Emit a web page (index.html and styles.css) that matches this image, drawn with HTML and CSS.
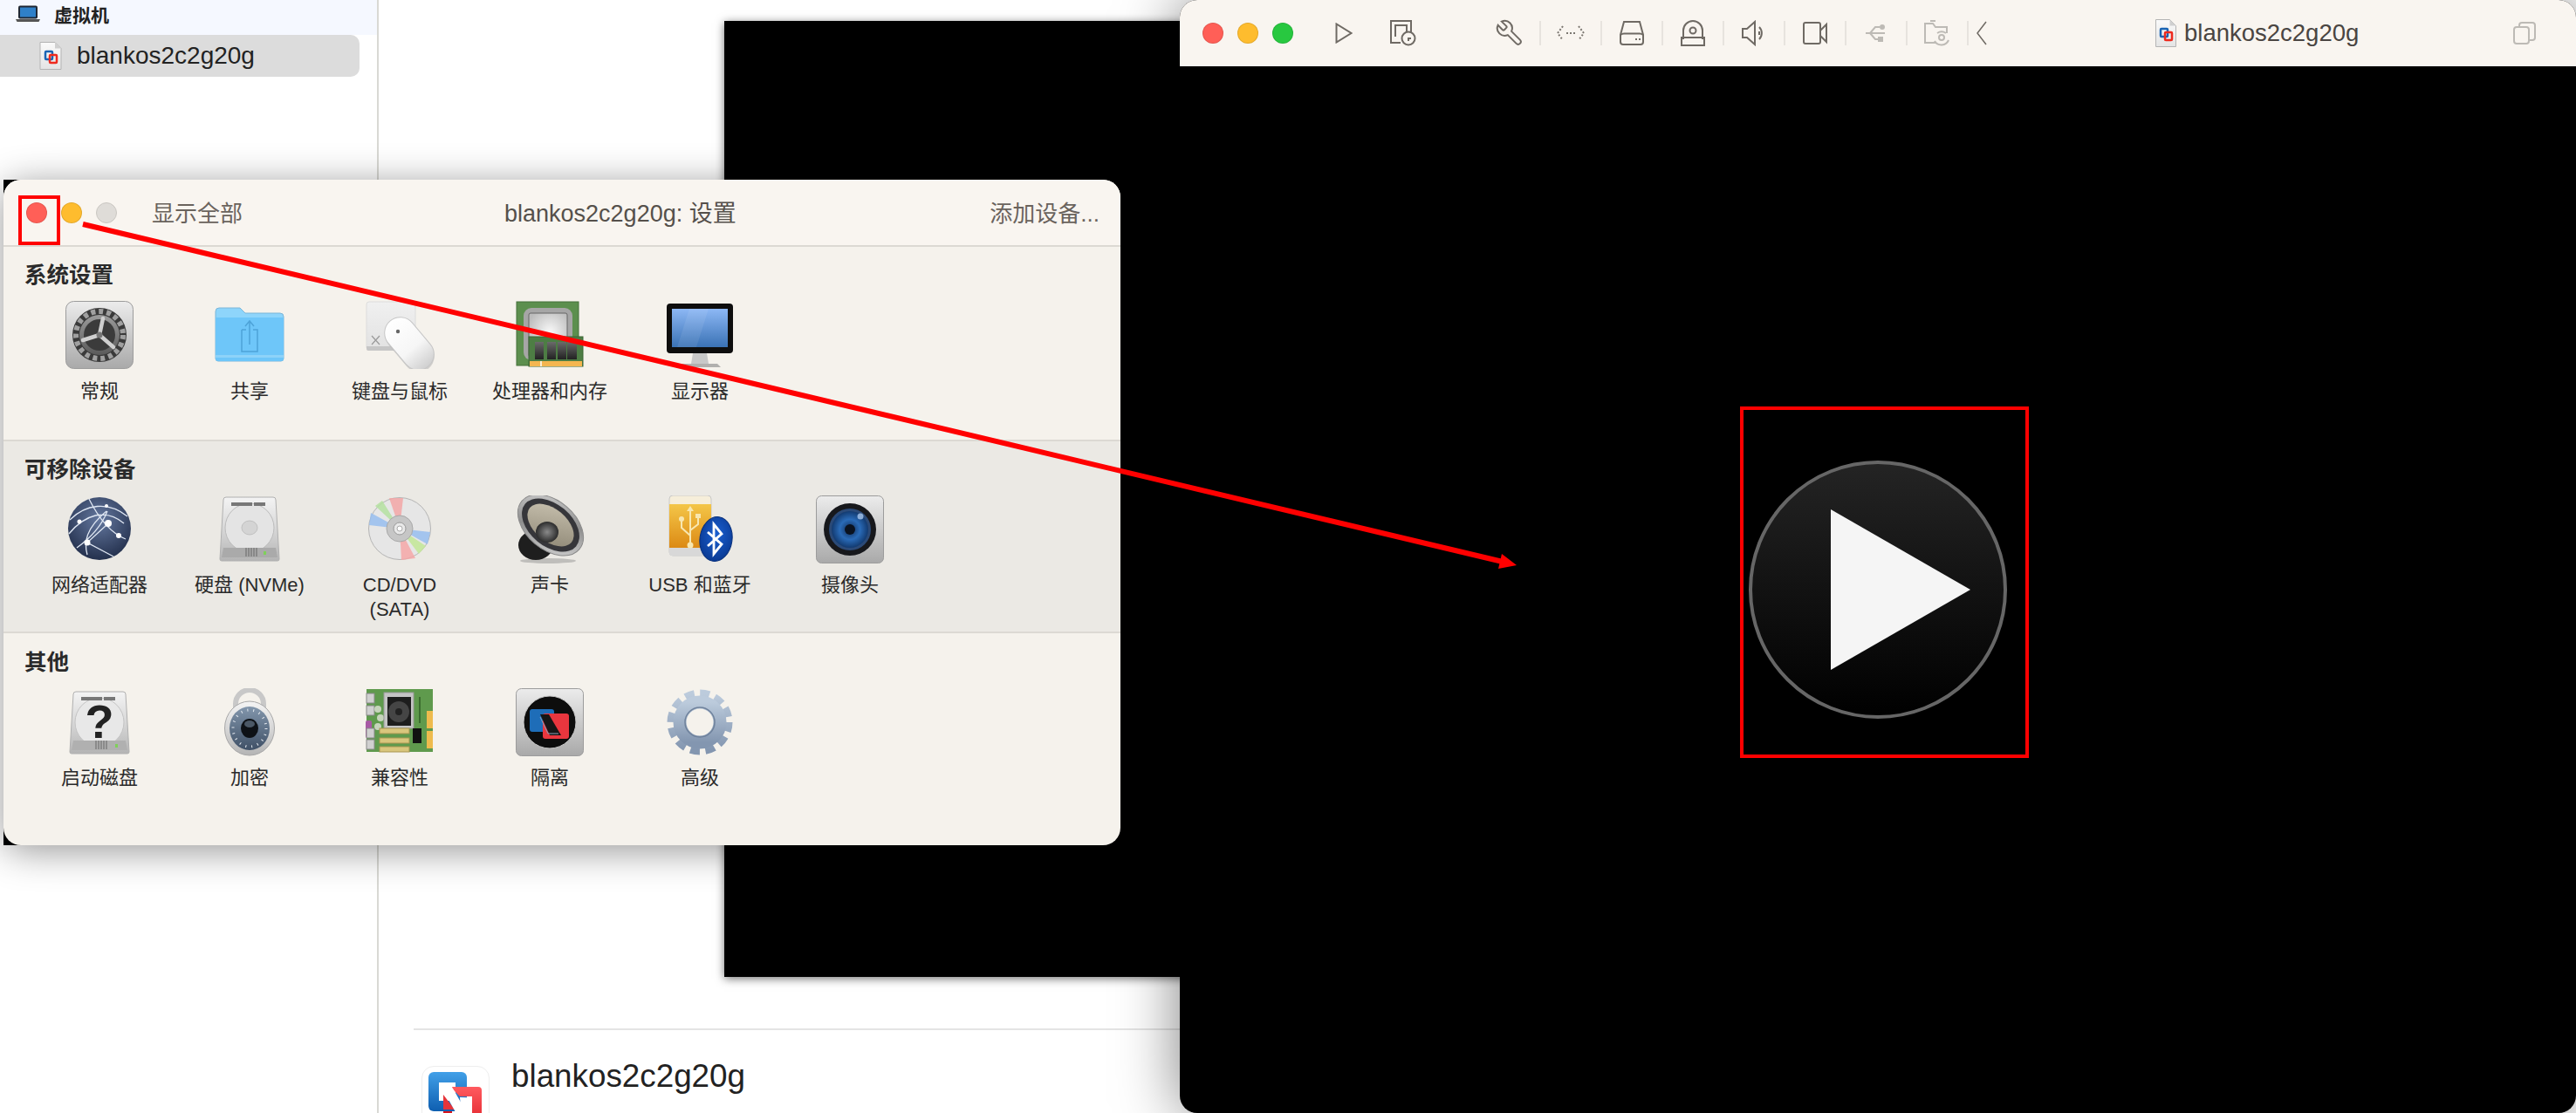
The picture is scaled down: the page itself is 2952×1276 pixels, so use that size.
FILE: index.html
```html
<!DOCTYPE html>
<html lang="zh">
<head>
<meta charset="utf-8">
<title>blankos2c2g20g</title>
<link rel="stylesheet" href="styles.css">
</head>
<body>
<svg class="defs" width="0" height="0" aria-hidden="true">
  <defs>
    <linearGradient id="silver" x1="0" y1="0" x2="0" y2="1"><stop offset="0" stop-color="#ececec"/><stop offset="1" stop-color="#a9a9a9"/></linearGradient>
    <linearGradient id="metal" x1="0" y1="0" x2="0" y2="1"><stop offset="0" stop-color="#f4f4f4"/><stop offset=".55" stop-color="#d4d4d4"/><stop offset="1" stop-color="#b4b4b4"/></linearGradient>
    <linearGradient id="mouse" x1="0" y1="0" x2="0" y2="1"><stop offset="0" stop-color="#fff"/><stop offset=".6" stop-color="#f6f6f6"/><stop offset="1" stop-color="#cfcfcf"/></linearGradient>
    <linearGradient id="key" x1="0" y1="0" x2="0" y2="1"><stop offset="0" stop-color="#f0f0f0"/><stop offset="1" stop-color="#e2e2e2"/></linearGradient>
    <radialGradient id="cpu" cx=".55" cy=".45" r=".6"><stop offset="0" stop-color="#fafafa"/><stop offset="1" stop-color="#bcbcbc"/></radialGradient>
    <linearGradient id="ramchip" x1="0" y1="0" x2="0" y2="1"><stop offset="0" stop-color="#6a6a6a"/><stop offset="1" stop-color="#222"/></linearGradient>
    <linearGradient id="darkmetal" x1="0" y1="0" x2="0" y2="1"><stop offset="0" stop-color="#9b9b9b"/><stop offset="1" stop-color="#5a5a5a"/></linearGradient>
    <linearGradient id="screen" x1="0" y1="0" x2="0" y2="1"><stop offset="0" stop-color="#8db8f5"/><stop offset="1" stop-color="#3a72b5"/></linearGradient>
    <radialGradient id="globe" cx=".5" cy=".35" r=".7"><stop offset="0" stop-color="#64789f"/><stop offset="1" stop-color="#1f2b47"/></radialGradient>
    <linearGradient id="cone" x1="0" y1="0" x2="1" y2="1"><stop offset="0" stop-color="#cbc4b2"/><stop offset="1" stop-color="#8c8573"/></linearGradient>
    <linearGradient id="rim" x1="0" y1="0" x2="1" y2="1"><stop offset="0" stop-color="#d6d6d6"/><stop offset=".5" stop-color="#8e8e8e"/><stop offset="1" stop-color="#dcdcdc"/></linearGradient>
    <radialGradient id="dome" cx=".5" cy=".5" r=".5"><stop offset="0" stop-color="#8a8a8a"/><stop offset="1" stop-color="#2c2c2c"/></radialGradient>
    <linearGradient id="usbcard" x1="0" y1="0" x2="0" y2="1"><stop offset="0" stop-color="#f4c648"/><stop offset="1" stop-color="#dc8a14"/></linearGradient>
    <radialGradient id="btblue" cx=".5" cy=".4" r=".6"><stop offset="0" stop-color="#1a5fd0"/><stop offset="1" stop-color="#0a3a94"/></radialGradient>
    <radialGradient id="lens" cx=".5" cy=".5" r=".5"><stop offset="0" stop-color="#0f2a55"/><stop offset=".55" stop-color="#2a6bb8"/><stop offset="1" stop-color="#123a70"/></radialGradient>
    <linearGradient id="steel" x1="0" y1="0" x2="0" y2="1"><stop offset="0" stop-color="#bccbdc"/><stop offset="1" stop-color="#8396b0"/></linearGradient>
    <linearGradient id="dial" x1="0" y1="0" x2="0" y2="1"><stop offset="0" stop-color="#8296ac"/><stop offset="1" stop-color="#3f5066"/></linearGradient>
    <linearGradient id="logoblue" x1="0" y1="0" x2="0" y2="1"><stop offset="0" stop-color="#41a0e8"/><stop offset="1" stop-color="#0e5eb0"/></linearGradient>
    <linearGradient id="logored" x1="0" y1="0" x2="0" y2="1"><stop offset="0" stop-color="#ff5a5f"/><stop offset="1" stop-color="#d8161e"/></linearGradient>
    <linearGradient id="playdisc" x1="0" y1="0" x2="0" y2="1"><stop offset="0" stop-color="#242424"/><stop offset="1" stop-color="#000"/></linearGradient>
    <linearGradient id="pagefill" x1="0" y1="0" x2="0" y2="1"><stop offset="0" stop-color="#fafafa"/><stop offset="1" stop-color="#e4e4e4"/></linearGradient>
  </defs>
</svg>

<div class="desktop">
  <div class="app">
    <aside class="sidebar">
      <div class="side-head">
        <svg class="side-laptop" width="30" height="20" viewBox="0 0 30 20"><rect x="4" y="0.5" width="22" height="15" rx="2" fill="#1f2733"/><rect x="6" y="2.5" width="18" height="11" fill="#2f80c8"/><path d="M1 16h28l-1.5 3h-25z" fill="#555"/></svg>
        <span>虚拟机</span>
      </div>
      <div class="side-row">
        <svg width="26" height="32" viewBox="0 0 26 32"><path d="M1 .5h17l7 7v24H1z" fill="url(#pagefill)" stroke="#b4b4b4"/><path d="M18 .5v7h7z" fill="#d0d0d0"/><rect x="7" y="11" width="8" height="9" rx="1" fill="none" stroke="#1a64b4" stroke-width="2.5"/><rect x="12" y="15" width="8" height="9" rx="1" fill="none" stroke="#ee2a1e" stroke-width="2.5"/></svg>
        <span>blankos2c2g20g</span>
      </div>
    </aside>
    <main class="content">
      <div class="preview"></div>
      <div class="detail">
        <div class="detail-icon">
          <svg width="78" height="78" viewBox="0 0 78 78"><rect x="8" y="7" width="44" height="45" rx="6" fill="url(#logoblue)"/><path d="M20 19h19v21H20z" fill="#fff"/><path d="M25 33l13 17H25z" fill="#e5343a"/><path d="M25 52h10v26H25z" fill="#d8161e"/><path d="M33 24h32a4 4 0 0 1 4 4v50H58V35H44z" fill="url(#logored)"/><path d="M20 19h12l34 59H53z" fill="#fff" transform="translate(0 0)"/><path d="M44 36l14 .5V78L46 58z" fill="#fff"/></svg>
        </div>
        <h1 class="detail-name">blankos2c2g20g</h1>
      </div>
    </main>
  </div>

  <section class="vm-window">
    <header class="vm-bar">
      <div class="lights"><i class="light red"></i><i class="light amber"></i><i class="light green"></i></div>
      <svg class="vm-play" width="20" height="24" viewBox="0 0 20 24"><path d="M1.5 1.5v21L18.5 12z" fill="none" stroke="#6f6a64" stroke-width="2"/></svg>
      <svg class="vm-snap" width="30" height="30" viewBox="0 0 30 30" fill="none" stroke="#6f6a64" stroke-width="2"><path d="M12 26H1V1h23v14"/><path d="M6 19V6h13v9"/><circle cx="21" cy="21" r="7.5" fill="#f9f5f0"/><path d="M24 21h-3v3"/></svg>
      <div class="tools">
        <div class="tool"><svg width="34" height="34" viewBox="0 0 24 24" fill="none" stroke="#6f6a64" stroke-width="1.4"><path transform="matrix(-1 0 0 1 24 0)" d="M14.7 6.3a1 1 0 0 0 0 1.4l1.6 1.6a1 1 0 0 0 1.4 0l3.77-3.77a6 6 0 0 1-7.94 7.94l-6.91 6.91a2.12 2.12 0 0 1-3-3l6.91-6.91a6 6 0 0 1 7.94-7.94l-3.76 3.76z"/></svg></div>
        <div class="tool"><svg width="32" height="22" viewBox="0 0 32 22" fill="none" stroke="#7c7771" stroke-width="2" stroke-dasharray="2 2"><path d="M7 3L1 11l6 8M25 3l6 8-6 8M11 11h10"/></svg></div>
        <div class="tool"><svg width="30" height="28" viewBox="0 0 30 28" fill="none" stroke="#6f6a64" stroke-width="2"><path d="M6 1h18l4 15v8a3 3 0 0 1-3 3H5a3 3 0 0 1-3-3v-8z"/><path d="M2 16c2-1.500 3-1.500 4-1.500h18c1 0 2 0 4 1.500"/><path d="M19 21h2M23 21h2"/></svg></div>
        <div class="tool"><svg width="30" height="30" viewBox="0 0 30 30" fill="none" stroke="#6f6a64" stroke-width="2"><path d="M4 22V12a11 11 0 0 1 22 0v10"/><circle cx="15" cy="12" r="3.500"/><path d="M2 20h26v9H2z"/></svg></div>
        <div class="tool"><svg width="30" height="30" viewBox="0 0 30 30" fill="none" stroke="#6f6a64" stroke-width="2"><path d="M2 10h5l9-8v26l-9-8H2z"/><path d="M21 8a10 10 0 0 1 0 14"/><path d="M21 13v4"/></svg></div>
        <div class="tool"><svg width="30" height="28" viewBox="0 0 30 28" fill="none" stroke="#6f6a64" stroke-width="2"><path d="M4 2h15a2 2 0 0 1 2 2v20a2 2 0 0 1-2 2H4a2 2 0 0 1-2-2V4a2 2 0 0 1 2-2z"/><path d="M21 11l7-7v20l-7-7"/></svg></div>
        <div class="tool"><svg width="26" height="22" viewBox="0 0 26 22" fill="none" stroke="#bdbab5" stroke-width="2"><path d="M1 11h22M6 11l6-7h5M6 11l6 7h5"/><circle cx="20" cy="4" r="2" fill="#bdbab5"/><rect x="16" y="16" width="4" height="4" fill="#bdbab5"/></svg></div>
        <div class="tool"><svg width="32" height="32" viewBox="0 0 32 32" fill="none" stroke="#bdbab5" stroke-width="2"><path d="M14 27H2V5h9l3 4h13v7"/><path d="M8 2h6"/><circle cx="21" cy="21" r="3"/><path d="M13 25a9 9 0 0 0 16-1M16 16a9 9 0 0 1 10 0"/></svg></div>
      </div>
      <svg class="vm-back" width="12" height="28" viewBox="0 0 12 28"><path d="M11 1L1 14l10 13" fill="none" stroke="#6f6a64" stroke-width="1.500"/></svg>
      <div class="vm-title">
        <svg width="24" height="32" viewBox="0 0 24 32"><path d="M.5.5h16l7 7v24H.5z" fill="url(#pagefill)" stroke="#b4b4b4"/><path d="M16.500.5v7h7z" fill="#d0d0d0"/><rect x="6" y="11" width="8" height="9" rx="1" fill="none" stroke="#1a64b4" stroke-width="2.500"/><rect x="11" y="15" width="8" height="9" rx="1" fill="none" stroke="#ee2a1e" stroke-width="2.500"/></svg>
        <span>blankos2c2g20g</span>
      </div>
      <svg class="vm-copy" width="26" height="26" viewBox="0 0 26 26" fill="none" stroke="#bdbab5" stroke-width="2"><rect x="1" y="6" width="17" height="19" rx="3"/><path d="M7 6V4a3 3 0 0 1 3-3h12a3 3 0 0 1 3 3v14a3 3 0 0 1-3 3h-4"/></svg>
    </header>
    <div class="vm-stage"></div>
    <svg class="play-disc" width="296" height="296" viewBox="0 0 296 296"><circle cx="148" cy="148" r="146" fill="url(#playdisc)" stroke="#666" stroke-width="4"/><path d="M94 56v184l160-92z" fill="#f5f5f5"/></svg>
  </section>

  <section class="settings">
    <div class="settings-panel">
      <header class="set-bar">
        <div class="lights"><i class="light red"></i><i class="light amber"></i><i class="light off"></i></div>
        <span class="set-all">显示全部</span>
        <span class="set-title">blankos2c2g20g: 设置</span>
        <span class="set-add">添加设备...</span>
      </header>

      <div class="group first">
        <h2>系统设置</h2>
        <div class="items">
          <div class="item">
            <svg width="80" height="78" viewBox="0 0 80 78"><rect x="1.500" y=".5" width="77" height="77" rx="9" fill="url(#silver)" stroke="#9c9c9c"/><circle cx="40" cy="39" r="31" fill="#3a3a3a"/><circle cx="40" cy="39" r="27" fill="none" stroke="#a0a0a0" stroke-width="6" stroke-dasharray="5 4"/><circle cx="40" cy="39" r="23" fill="url(#darkmetal)"/><circle cx="40" cy="39" r="18" fill="#3b3b3b"/><path d="M40 39L44 20M40 39L21 45M40 39L56 53" stroke="#cfcfcf" stroke-width="4.500" stroke-linecap="round"/><circle cx="40" cy="39" r="3.500" fill="#777"/></svg>
            <span>常规</span>
          </div>
          <div class="item">
            <svg width="80" height="78" viewBox="0 0 80 78"><path d="M1 12a4 4 0 0 1 4-4h24l6 6h40a4 4 0 0 1 4 4v48a3 3 0 0 1-3 3H4a3 3 0 0 1-3-3z" fill="#8ed5fb" stroke="#7bb6d8"/><path d="M1 19h78v47a3 3 0 0 1-3 3H4a3 3 0 0 1-3-3z" fill="#6ec6f9"/><path d="M1 62h78v3H1z" fill="#8dd2f9"/><g fill="none" stroke="#4ea3d8" stroke-width="1.500"><path d="M31 33v25h18V33h-5M36 33h-5"/><path d="M40 50V24M35 29l5-6 5 6"/></g></svg>
            <span>共享</span>
          </div>
          <div class="item">
            <svg width="80" height="78" viewBox="0 0 80 78"><rect x="2" y="1" width="56" height="55" rx="3" fill="url(#key)" stroke="#dcdcdc"/><path d="M2 52h56v3a2 2 0 0 1-2 2H4a2 2 0 0 1-2-2z" fill="#c6c6c6"/><path d="M8 40l9 10M17 40l-9 10" stroke="#9a9a9a" stroke-width="1.200"/><g transform="rotate(-40 51 49)"><rect x="33" y="15" width="36" height="68" rx="18" fill="#b0b0b0" opacity=".5" transform="translate(-1 2)"/><rect x="33" y="15" width="36" height="68" rx="18" fill="url(#mouse)" stroke="#c6c6c6"/></g><circle cx="38" cy="35" r="2.200" fill="#666"/></svg>
            <span>键盘与鼠标</span>
          </div>
          <div class="item">
            <svg width="80" height="78" viewBox="0 0 80 78"><rect x="2" y="1" width="71" height="73" fill="#5c8f4e" stroke="#44703a"/><rect x="10" y="8" width="56" height="60" rx="9" fill="#a6a6a6"/><rect x="16" y="14" width="44" height="50" rx="2" fill="url(#cpu)" stroke="#666"/><rect x="16" y="41" width="62" height="34" fill="#4d7d44" stroke="#3c6634"/><g fill="url(#ramchip)"><rect x="23" y="47" width="10" height="20"/><rect x="37" y="47" width="10" height="20"/><rect x="49" y="47" width="10" height="20"/><rect x="60" y="47" width="11" height="20"/></g><rect x="17" y="69" width="60" height="6" fill="#f4b650"/><path d="M30 69v6" stroke="#fff" stroke-width="1.500"/></svg>
            <span>处理器和内存</span>
          </div>
          <div class="item">
            <svg width="80" height="78" viewBox="0 0 80 78"><rect x="2" y="3" width="76" height="57" rx="4" fill="#0e0e0e"/><rect x="8" y="9" width="64" height="44" fill="url(#screen)"/><path d="M28 9h22L36 53H14z" fill="#fff" opacity=".08"/><path d="M32 60h16l2 12H30z" fill="#c8c8c8"/><path d="M20 72h40l4 4H16z" fill="#9a9a9a" opacity=".75"/></svg>
            <span>显示器</span>
          </div>
        </div>
      </div>

      <div class="group shaded">
        <h2>可移除设备</h2>
        <div class="items">
          <div class="item">
            <svg width="80" height="78" viewBox="0 0 80 78"><circle cx="40" cy="38" r="36" fill="url(#globe)"/><g fill="none" stroke="#dfe7f3" stroke-width="1.300"><path d="M6 28C24 10 50 6 72 24M5 44c18-22 42-30 63-12M14 60c14-10 28-24 35-42M28 4c8 16 22 38 42 46M26 68c-4-14-2-30 22-50M48 34L26 54l30 16"/></g><g fill="#fff"><circle cx="50" cy="32" r="4"/><circle cx="26" cy="54" r="3.500"/><circle cx="62" cy="46" r="3"/><circle cx="17" cy="30" r="2.500"/><circle cx="48" cy="12" r="2"/></g></svg>
            <span>网络适配器</span>
          </div>
          <div class="item">
            <svg width="80" height="78" viewBox="0 0 80 78"><path d="M10 5a3 3 0 0 1 3-3h54a3 3 0 0 1 3 3l4 68a2 2 0 0 1-2 2H8a2 2 0 0 1-2-2z" fill="url(#metal)" stroke="#b0b0b0"/><circle cx="40" cy="37" r="28" fill="#e4e4e4" stroke="#bcbcbc"/><ellipse cx="40" cy="37" rx="9" ry="8" fill="#d4d4d4" stroke="#c0c0c0"/><rect x="19" y="8" width="24" height="4" fill="#777"/><rect x="45" y="8" width="13" height="4" fill="#777"/><path d="M10 60h60l2 11H8z" fill="#aaa"/><g stroke="#666"><path d="M36 60v10M39 60v10M42 60v10M45 60v10M48 60v10"/></g><rect x="56" y="64" width="3" height="4" fill="#7fd05a"/></svg>
            <span>硬盘 (NVMe)</span>
          </div>
          <div class="item">
            <svg width="80" height="78" viewBox="0 0 80 78"><circle cx="40" cy="38" r="35.500" fill="#e6e6e6" stroke="#b4b4b4"/><path d="M40 38L28 3h16z" fill="#f4a3a3" opacity=".8"/><path d="M40 38L5 34l2-14z" fill="#96bdee" opacity=".85"/><path d="M40 38L12 12l8-6z" fill="#b4e0a0" opacity=".85"/><path d="M40 38L58 72l-16 2z" fill="#f6a4a4" opacity=".8"/><path d="M40 38L75 42l-3 14z" fill="#96bdee" opacity=".85"/><path d="M40 38L70 58l-8 9z" fill="#c4e79a" opacity=".9"/><circle cx="40" cy="38" r="15" fill="#c6c6c6" stroke="#a8a8a8"/><circle cx="40" cy="38" r="7" fill="#e8e8e8" stroke="#999"/><circle cx="40" cy="38" r="3" fill="#fff" stroke="#aaa"/></svg>
            <span>CD/DVD<br>(SATA)</span>
          </div>
          <div class="item">
            <svg width="80" height="78" viewBox="0 0 80 78"><ellipse cx="38" cy="75" rx="32" ry="3" fill="#8a8a8a" opacity=".45"/><ellipse cx="24" cy="57" rx="20" ry="17" fill="#1e1e1e"/><g transform="rotate(40 41 34)"><ellipse cx="41" cy="34" rx="43" ry="28" fill="url(#rim)" stroke="#8a8a8a"/><ellipse cx="41" cy="34" rx="38" ry="24" fill="#36363a"/><ellipse cx="41" cy="34" rx="31" ry="18.500" fill="url(#cone)"/></g><ellipse cx="37" cy="42" rx="13" ry="12" fill="url(#dome)"/></svg>
            <span>声卡</span>
          </div>
          <div class="item">
            <svg width="80" height="78" viewBox="0 0 80 78"><rect x="5" y="0" width="48" height="69" rx="4" fill="#f6eeda" stroke="#c8c8c8"/><rect x="5" y="10" width="48" height="50" fill="url(#usbcard)"/><path d="M5 60h48v6a3 3 0 0 1-3 3H8a3 3 0 0 1-3-3z" fill="#d8d8d8"/><g stroke="#f8e7b0" stroke-width="2" fill="none"><path d="M29 16v38M29 46l-10-9v-8M29 40l9-7v-7"/></g><circle cx="29" cy="57" r="3.500" fill="#f8e7b0"/><path d="M25 18l4-6 4 6z" fill="#f8e7b0"/><circle cx="19" cy="27" r="3" fill="#f8e7b0"/><rect x="35" y="21" width="6" height="5" fill="#f8e7b0"/><ellipse cx="58.500" cy="50" rx="18.500" ry="25.500" fill="url(#btblue)" stroke="#062f7c" transform="rotate(8 58.500 50)"/><path d="M49 42l16 14-9 11V33l9 11-16 14" fill="none" stroke="#fff" stroke-width="2.800"/></svg>
            <span>USB 和蓝牙</span>
          </div>
          <div class="item">
            <svg width="80" height="78" viewBox="0 0 80 78"><rect x="1.500" y=".5" width="77" height="77" rx="6" fill="url(#silver)" stroke="#9c9c9c"/><circle cx="40" cy="39" r="30" fill="#17181c"/><circle cx="40" cy="39" r="24" fill="#2b4a78"/><circle cx="40" cy="39" r="21" fill="url(#lens)"/><circle cx="40" cy="39" r="6" fill="#0a1220"/><circle cx="52" cy="24" r="3.500" fill="#a9c8ef" opacity=".8"/></svg>
            <span>摄像头</span>
          </div>
        </div>
      </div>

      <div class="group last">
        <h2>其他</h2>
        <div class="items">
          <div class="item">
            <svg width="80" height="78" viewBox="0 0 80 78"><path d="M10 7a3 3 0 0 1 3-3h54a3 3 0 0 1 3 3l4 66a2 2 0 0 1-2 2H8a2 2 0 0 1-2-2z" fill="url(#metal)" stroke="#b0b0b0"/><circle cx="40" cy="39" r="28" fill="#e8e8e8" stroke="#c4c4c4"/><text class="qmark" x="40" y="57">?</text><rect x="19" y="10" width="24" height="4" fill="#777"/><rect x="45" y="10" width="13" height="4" fill="#777"/><path d="M10 60h60l2 11H8z" fill="#b0b0b0"/><g stroke="#666"><path d="M36 60v10M39 60v10M42 60v10M45 60v10M48 60v10"/></g><rect x="58" y="64" width="3" height="4" fill="#7fd05a"/></svg>
            <span>启动磁盘</span>
          </div>
          <div class="item">
            <svg width="80" height="78" viewBox="0 0 80 78"><path d="M24 30V18a16 16 0 0 1 32 0v12" fill="none" stroke="#c8c8c8" stroke-width="6"/><ellipse cx="40" cy="46" rx="28.500" ry="31" fill="url(#metal)" stroke="#a8a8a8"/><ellipse cx="40" cy="46" rx="23" ry="25" fill="url(#dial)"/><ellipse cx="40" cy="46" rx="19" ry="21" fill="none" stroke="#e2e8ef" stroke-width="3" stroke-dasharray="1 6"/><ellipse cx="40" cy="46" rx="10" ry="11" fill="#0d1116"/><ellipse cx="40" cy="41" rx="6" ry="4" fill="#4b5866"/></svg>
            <span>加密</span>
          </div>
          <div class="item">
            <svg width="80" height="78" viewBox="0 0 80 78"><rect x="2" y="1" width="76" height="72" fill="#5f9a4d"/><rect x="2" y="6" width="9" height="11" fill="#d0d0d0" stroke="#888"/><rect x="2" y="20" width="9" height="11" fill="#d0d0d0" stroke="#888"/><rect x="1" y="37" width="7" height="20" rx="2" fill="#a85aa5"/><g fill="#c6d4bb"><circle cx="15" cy="24" r="4"/><circle cx="18" cy="34" r="4"/><circle cx="15" cy="44" r="4"/></g><rect x="22" y="5" width="34" height="41" fill="#c4c4c4" stroke="#999"/><rect x="26" y="10" width="27" height="33" fill="#1d1d1d"/><circle cx="39" cy="27" r="12" fill="#454545"/><circle cx="39" cy="27" r="4" fill="#222"/><g fill="#d9c67c" stroke="#a89550"><rect x="17" y="46" width="34" height="6"/><rect x="17" y="57" width="34" height="6"/><rect x="17" y="67" width="34" height="6"/></g><rect x="55" y="46" width="10" height="17" fill="#111"/><g fill="#eebb4d"><rect x="71" y="26" width="7" height="20"/><rect x="71" y="49" width="7" height="20"/></g><rect x="62" y="10" width="2" height="30" fill="#3b6d2f"/><rect x="2" y="46" width="9" height="11" fill="#d0d0d0" stroke="#888"/><rect x="2" y="59" width="9" height="11" fill="#d0d0d0" stroke="#888"/></svg>
            <span>兼容性</span>
          </div>
          <div class="item">
            <svg width="80" height="78" viewBox="0 0 80 78"><rect x="1.500" y=".5" width="77" height="77" rx="6" fill="url(#silver)" stroke="#9c9c9c"/><circle cx="40" cy="39" r="30" fill="#0d0d0d" stroke="#c8c8c8"/><rect x="17" y="24" width="28" height="26" rx="3" fill="#1e6db8"/><rect x="32" y="29" width="30" height="29" rx="3" fill="#e9363e"/><path d="M29 30h10l14 24H40z" fill="#161616"/><path d="M29 33l9 19h12" fill="none" stroke="#8aa0b8" stroke-width="1"/></svg>
            <span>隔离</span>
          </div>
          <div class="item">
            <svg width="80" height="78" viewBox="0 0 80 78"><circle cx="40" cy="39" r="32" fill="none" stroke="url(#steel)" stroke-width="11" stroke-dasharray="10.500 6.250"/><circle cx="40" cy="39" r="23" fill="none" stroke="url(#steel)" stroke-width="15"/><circle cx="40" cy="39" r="17" fill="none" stroke="#6f829c" stroke-width="1.500"/></svg>
            <span>高级</span>
          </div>
        </div>
      </div>
    </div>
  </section>

  <svg class="arrow" width="2952" height="1276" viewBox="0 0 2952 1276"><path d="M95 257L1722 644" fill="none" stroke="#f00" stroke-width="6"/><path d="M1738 648L1717 652L1721 635z" fill="#f00"/></svg>
  <div class="mark mark-close"></div>
  <div class="mark mark-play"></div>
</div>
</body>
</html>
```
FILE: styles.css
```css
* { box-sizing: border-box; }
html, body { margin: 0; padding: 0; }
body { font-family: "Liberation Sans", "Noto Sans CJK SC", sans-serif; background: #fff; color: #222; }
.defs { position: absolute; }
.desktop { position: relative; width: 2952px; height: 1276px; overflow: hidden; background: #fff; }

.app { display: flex; height: 100%; }
.sidebar { width: 434px; flex: none; border-right: 2px solid #d9d9d4; background: #fff; }
.side-head { display: flex; align-items: center; gap: 15px; height: 40px; padding: 0 0 8px 17px; background: #f5f8ff; font-size: 21px; font-weight: 700; color: #222; }
.side-row { display: flex; align-items: center; gap: 17px; width: 412px; height: 48px; padding-left: 45px; border-radius: 0 10px 10px 0; background: #dcdcdc; font-size: 28px; color: #222; }
.content { flex: 1; min-width: 0; }
.preview { width: 1300px; height: 1096px; margin: 24px 0 0 396px; background: #000; box-shadow: 0 2px 10px rgba(0, 0, 0, .55); }
.detail { margin: 59px 0 0 40px; border-top: 2px solid #e4e4e4; display: flex; align-items: flex-start; gap: 25px; padding: 41px 0 0 9px; }
.detail-icon { flex: none; width: 78px; height: 78px; background: #fff; border: 1px solid #eee; border-radius: 14px; }
.detail-icon svg { display: block; margin: -1px; }
.detail-name { margin: -10px 0 0; font-size: 36.800px; line-height: 44px; font-weight: 400; color: #222; }

.lights { display: flex; gap: 16px; flex: none; }
.light { display: block; width: 24px; height: 24px; border-radius: 50%; border: 1px solid rgba(0, 0, 0, .1); }
.red { background: #ff5f57; }
.amber { background: #febc2e; }
.green { background: #28c840; }
.off { background: #dfdcd8; border-color: #c9c6c1; }

.vm-window { position: absolute; left: 1352px; top: 0; width: 1600px; height: 1276px; display: flex; flex-direction: column; border-radius: 20px; background: #000; box-shadow: 0 0 70px rgba(0, 0, 0, .5); }
.vm-bar { flex: none; display: flex; align-items: center; height: 76px; padding-left: 26px; border-radius: 20px 20px 0 0; background: #f9f5f0; }
.vm-stage { flex: 1; }
.vm-play { margin-left: 48px; flex: none; }
.vm-snap { margin-left: 43px; flex: none; }
.tools { display: flex; margin-left: 73px; flex: none; }
.tool { display: flex; align-items: center; justify-content: center; width: 70px; height: 28px; border-right: 2px solid #e7e3de; }
.vm-back { margin-left: 9px; flex: none; }
.vm-title { display: flex; align-items: center; gap: 9px; margin-left: 193px; font-size: 27.500px; color: #4a4542; }
.vm-copy { margin-left: auto; margin-right: 46px; flex: none; }
.play-disc { position: absolute; left: 652px; top: 528px; }

.settings { position: absolute; left: 4px; top: 206px; width: 1280px; height: 763px; background: linear-gradient(90deg, #000 0 30px, transparent 30px); }
.settings-panel { display: flex; flex-direction: column; height: 100%; border-radius: 20px; overflow: hidden; background: #f5f2ec; box-shadow: 0 6px 44px rgba(0, 0, 0, .42); }
.set-bar { flex: none; display: flex; align-items: center; height: 75px; padding: 0 24px 3px 26px; background: #f9f5f0; font-size: 26px; color: #6a635d; }
.set-bar .lights { margin-top: 3px; }
.set-all { margin-left: 40px; }
.set-title { margin-left: 300px; font-size: 27px; color: #55504b; }
.set-add { margin-left: auto; }

.group { border-top: 2px solid #dcd9d3; padding: 16px 0 0 24px; }
.group h2 { margin: 0 0 14px; font-size: 25.500px; line-height: 32px; font-weight: 700; color: #2a2a2a; }
.first { padding-bottom: 41px; }
.first .item svg { margin-bottom: 12px; }
.shaded { background: #ebe9e4; padding-bottom: 11px; }
.last { flex: 1; padding-top: 17px; }
.items { display: grid; grid-template-columns: repeat(6, 172px); justify-content: start; }
.item { display: flex; flex-direction: column; align-items: center; font-size: 22px; line-height: 28px; text-align: center; color: #2a2a2a; }
.item svg { display: block; margin-bottom: 11px; }
.qmark { font-size: 54px; font-weight: 700; fill: #222; text-anchor: middle; }

.arrow { position: absolute; left: 0; top: 0; pointer-events: none; }
.mark { position: absolute; border: 4px solid #f00; }
.mark-close { left: 21px; top: 224px; width: 48px; height: 57px; }
.mark-play { left: 1994px; top: 466px; width: 331px; height: 403px; }
```
